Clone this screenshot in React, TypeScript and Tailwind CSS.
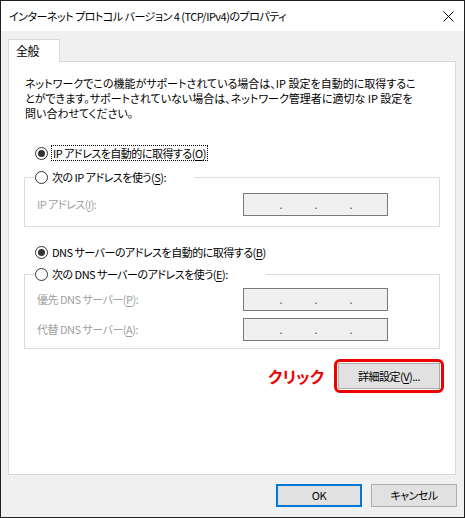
import React from 'react';

const jp = "font-['Noto_Sans_CJK_JP',sans-serif] [font-feature-settings:'palt']";

const Key = ({ k }: { k: string }) => <span className="underline underline-offset-2">{k}</span>;

const Radio = ({ checked = false }: { checked?: boolean }) => (
  <span className="flex h-[13px] w-[13px] shrink-0 items-center justify-center rounded-full border border-[#333] bg-white">
    {checked && <span className="h-[7px] w-[7px] rounded-full bg-[#333]" />}
  </span>
);

const IpBox = () => (
  <div className="flex h-[23px] w-[145px] items-center border border-[#7a7a7a] bg-[#f0f0f0] pl-[2px] text-[#555]">
    <span className="w-[36px] text-right leading-none">.</span>
    <span className="w-[35px] text-right leading-none">.</span>
    <span className="w-[35px] text-right leading-none">.</span>
  </div>
);

const Field = ({ label }: { label: React.ReactNode }) => (
  <div className="flex items-center">
    <span className="w-[206px] text-[#a0a0a0]">{label}</span>
    <IpBox />
  </div>
);

export default function App() {
  return (
    <div className={`flex h-[518px] w-[465px] flex-col whitespace-nowrap border border-[#1f1f1f] bg-[#f0f0f0] text-[11px] tracking-[-0.5px] text-black ${jp}`}>
      {/* title bar */}
      <div className="flex h-[30px] shrink-0 items-center justify-between bg-white pl-[8px] pr-[10px]">
        <span className="text-[11px]">インターネット プロトコル バージョン 4 (TCP/IPv4)のプロパティ</span>
        <svg width="11" height="11" viewBox="0 0 11 11">
          <path d="M0.5 0.5 L10.5 10.5 M10.5 0.5 L0.5 10.5" stroke="#000" strokeWidth="1" />
        </svg>
      </div>

      <div className="flex flex-1 flex-col px-[7px] pt-[8px]">
        <div className="flex">
          <div className="relative z-10 -mb-px flex h-[23px] w-[52px] items-center border border-b-0 border-[#d9d9d9] bg-white pl-[7px] text-[12px]">
            全般
          </div>
        </div>

        <div className="flex h-[414px] w-[448px] flex-col border border-[#d9d9d9] bg-white px-[15px]">
          <p className="mt-[14px] pl-[1px] leading-[15px] tracking-normal">
            ネットワークでこの機能がサポートされている場合は、IP 設定を自動的に取得するこ
            <br />
            とができます。サポートされていない場合は、ネットワーク管理者に適切な IP 設定を
            <br />
            問い合わせてください。
          </p>

          <div className="ml-[11px] mt-[24px] flex h-[16px] items-center gap-[3px]">
            <Radio checked />
            <span className="flex h-[16px] items-center border border-dotted border-black px-[1px]">
              IP アドレスを自動的に取得する(<Key k="O" />)
            </span>
          </div>

          <fieldset className="mt-[8px] border border-[#dcdcdc] pb-[10px] pl-[12px]">
            <legend className="ml-[-2px] flex h-[16px] w-[159px] items-center gap-[4px]">
              <Radio />
              <span>次の IP アドレスを使う(<Key k="S" />):</span>
            </legend>
            <div className="mt-[8px]">
              <Field label={<>IP アドレス(<Key k="I" />):</>} />
            </div>
          </fieldset>

          <div className="ml-[11px] mt-[17px] flex h-[16px] items-center gap-[4px]">
            <Radio checked />
            <span>DNS サーバーのアドレスを自動的に取得する(<Key k="B" />)</span>
          </div>

          <fieldset className="mt-[6px] border border-[#dcdcdc] pb-[7px] pl-[12px]">
            <legend className="ml-[-2px] flex h-[16px] w-[231px] items-center gap-[4px]">
              <Radio />
              <span>次の DNS サーバーのアドレスを使う(<Key k="E" />):</span>
            </legend>
            <div className="mt-[6px] flex flex-col gap-[7px]">
              <Field label={<>優先 DNS サーバー(<Key k="P" />):</>} />
              <Field label={<>代替 DNS サーバー(<Key k="A" />):</>} />
            </div>
          </fieldset>

          <div className="mt-[10px] flex items-center justify-end gap-[10px]">
            <span className="text-[16px] font-bold tracking-normal text-[#ee0000]">クリック</span>
            <div className="-mr-[4px] rounded-[6px] border-[3px] border-[#ee0000] p-px">
              <button className="flex h-[26px] w-[102px] items-center justify-center border border-[#adadad] bg-[#e1e1e1]">
                詳細設定(<Key k="V" />)...
              </button>
            </div>
          </div>
        </div>

        <div className="mt-[9px] flex justify-end gap-[9px]">
          <button className="flex h-[23px] w-[86px] items-center justify-center border-2 border-[#0078d7] bg-[#e1e1e1]">
            OK
          </button>
          <button className="flex h-[23px] w-[86px] items-center justify-center border border-[#adadad] bg-[#e1e1e1]">
            キャンセル
          </button>
        </div>
      </div>
    </div>
  );
}
